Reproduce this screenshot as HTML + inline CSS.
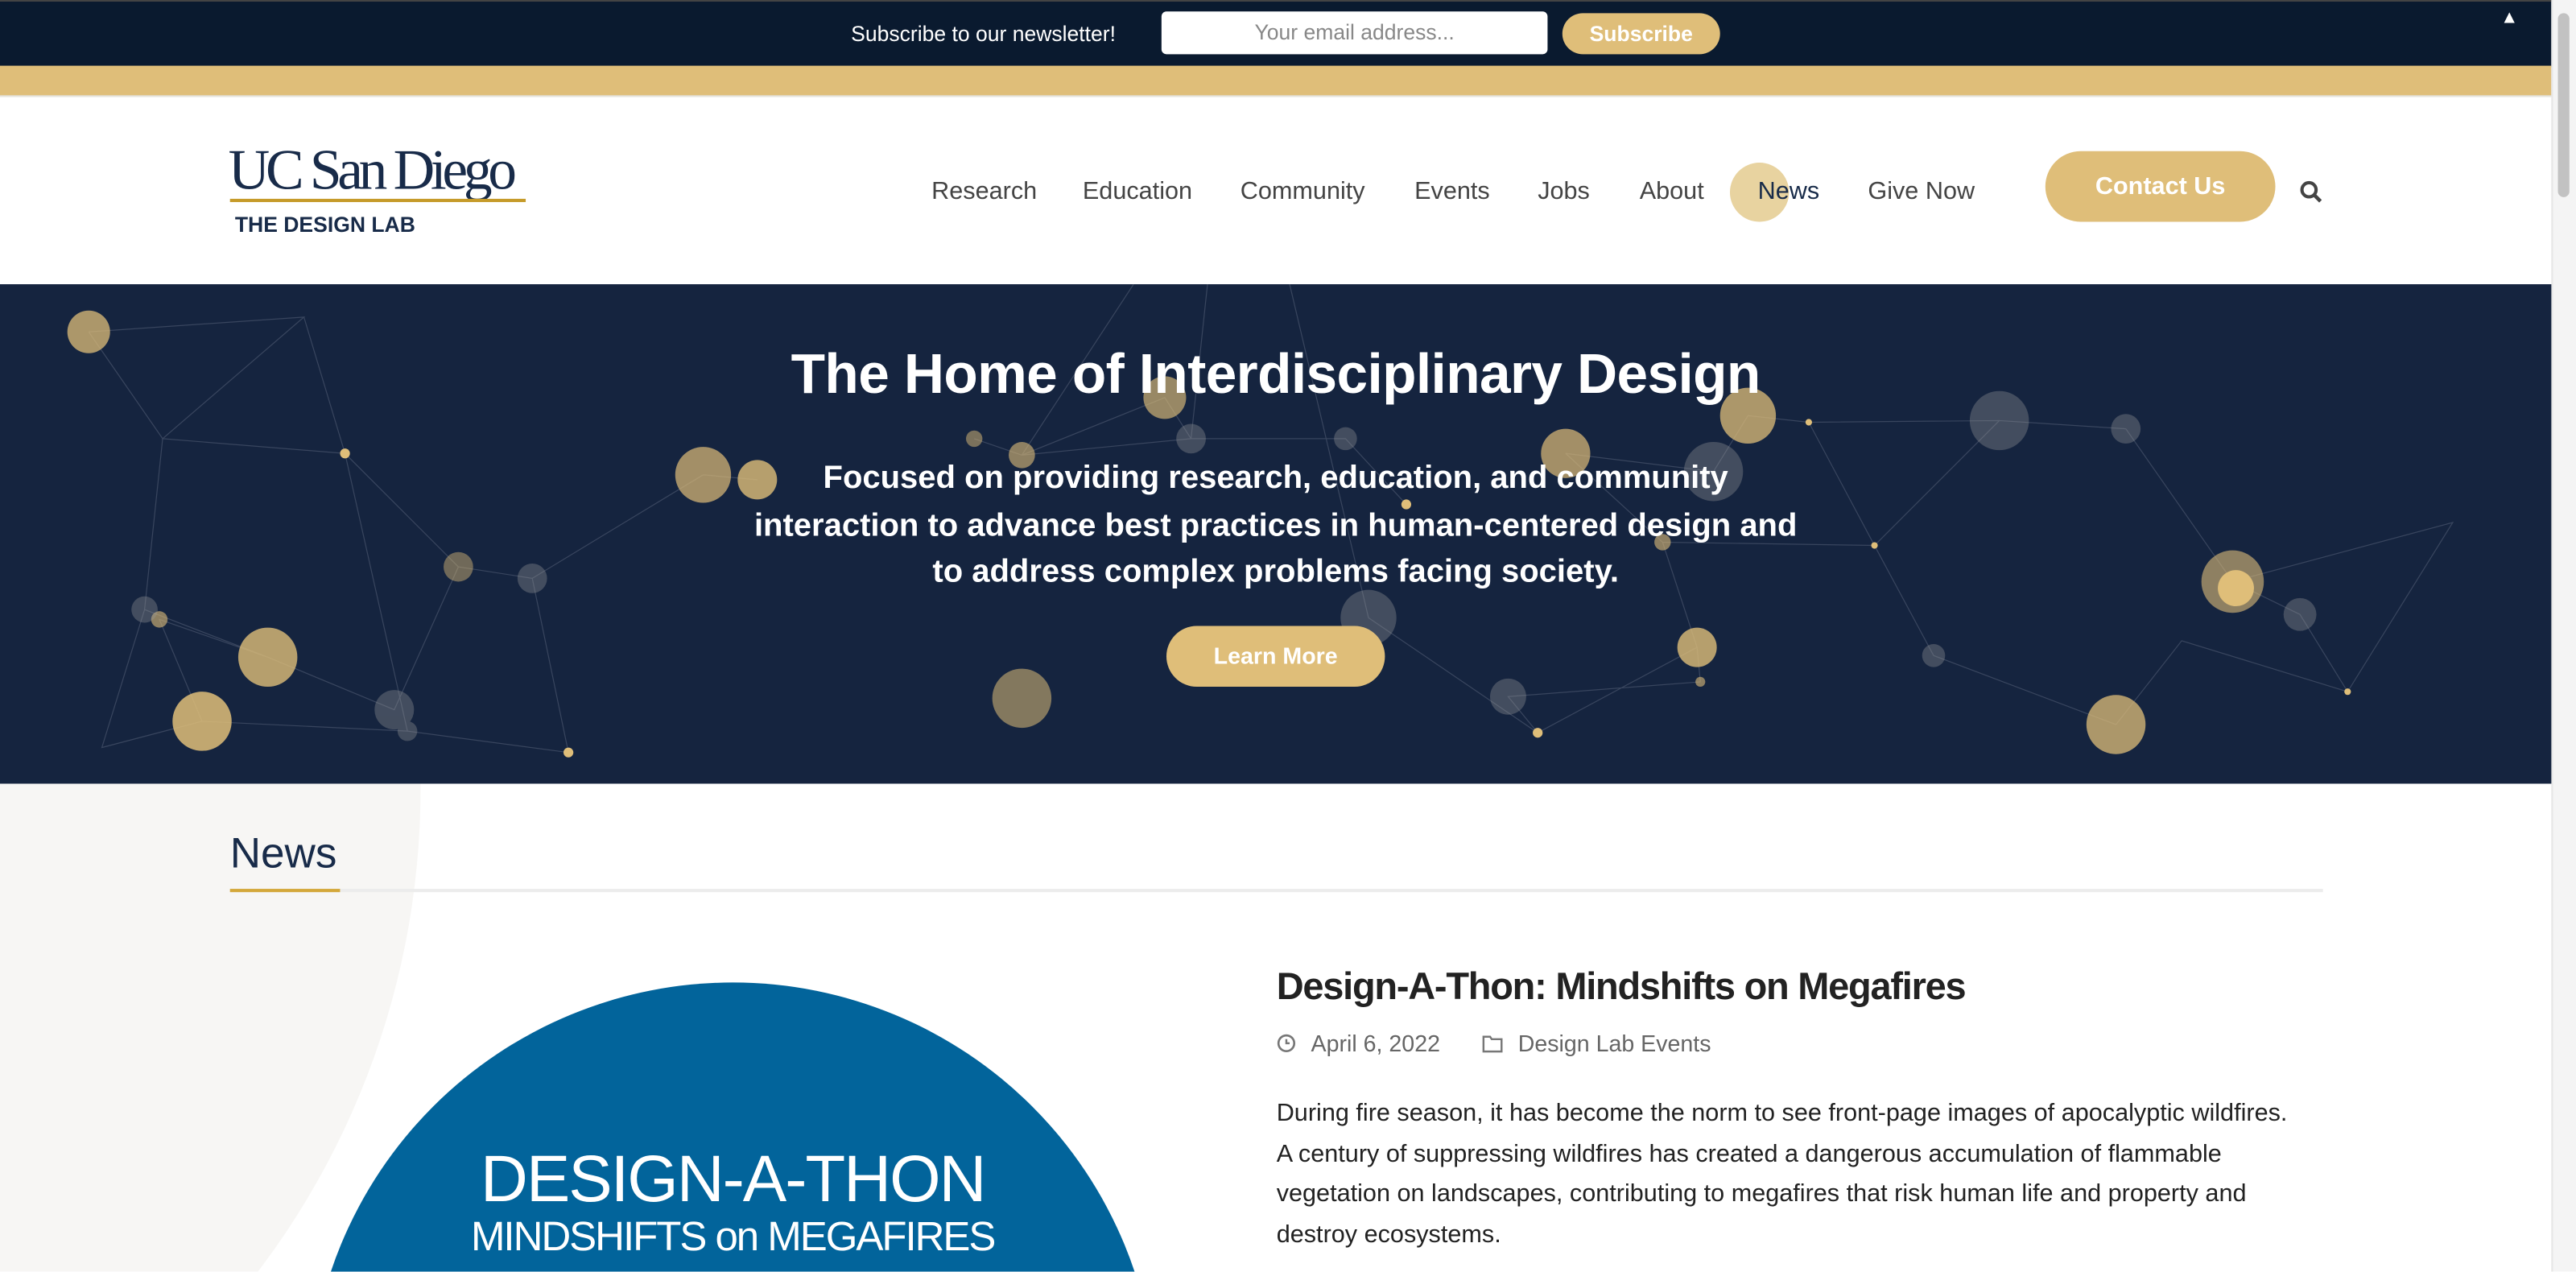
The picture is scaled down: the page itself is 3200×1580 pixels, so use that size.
<!DOCTYPE html>
<html><head><meta charset="utf-8"><style>
html,body{margin:0;padding:0;width:3200px;height:1580px;overflow:hidden;background:#fff}
#w{position:absolute;left:0;top:0;width:1568px;height:774px;transform:scale(2.0408);transform-origin:0 0;font-family:"Liberation Sans",sans-serif;overflow:hidden;background:#fff}
.a{position:absolute;white-space:nowrap}
.nav{top:108px;font-size:15px;color:#444}
</style></head><body><div id="w">
<div class="a" style="left:0;top:0;width:1553px;height:40px;background:#0a1a2f;border-top:1px solid #444"></div>
<div class="a" style="left:518px;top:13px;font-size:13px;color:#fff">Subscribe to our newsletter!</div>
<div class="a" style="left:707px;top:7px;width:235px;height:26px;background:#fff;border-radius:3px;font-size:13px;color:#888;text-align:center;line-height:26px">Your email address...</div>
<div class="a" style="left:951px;top:8px;width:96px;height:25px;background:#dfbe79;border-radius:13px;font-size:13px;color:#fff;font-weight:bold;text-align:center;line-height:25px">Subscribe</div>
<div class="a" style="left:1522px;top:5px;font-size:11px;color:#fff">▲</div>
<div class="a" style="left:0;top:40px;width:1553px;height:18px;background:#dfbe79;border-bottom:1px solid #e4e4e0"></div>
<div class="a" style="left:1553px;top:0;width:15px;height:774px;background:#f4f4f4;border-left:1px solid #e6e6e6"></div>
<div class="a" style="left:1557px;top:8px;width:7px;height:112px;background:#c2c2c2;border-radius:4px"></div>

<div class="a" style="left:139px;top:84px;font-family:'Liberation Serif',serif;font-size:35px;color:#182b49;letter-spacing:-2.6px">UC San Diego</div>
<div class="a" style="left:140px;top:121px;width:180px;height:2px;background:#c69b2a"></div>
<div class="a" style="left:143px;top:129px;font-size:13px;font-weight:bold;color:#182b49">THE DESIGN LAB</div>

<div class="a" style="left:1053px;top:99px;width:36px;height:36px;border-radius:50%;background:#e8d3a0"></div>
<div class="a nav" style="left:567px">Research</div>
<div class="a nav" style="left:659px">Education</div>
<div class="a nav" style="left:755px">Community</div>
<div class="a nav" style="left:861px">Events</div>
<div class="a nav" style="left:936px">Jobs</div>
<div class="a nav" style="left:998px">About</div>
<div class="a nav" style="left:1070px;color:#182b49">News</div>
<div class="a nav" style="left:1137px">Give Now</div>
<div class="a" style="left:1245px;top:92px;width:140px;height:43px;border-radius:22px;background:#dfbe79;color:#fff;font-weight:bold;font-size:15px;text-align:center;line-height:43px">Contact Us</div>
<svg class="a" style="left:1400px;top:110px" width="14" height="14" viewBox="0 0 14 14"><circle cx="5.5" cy="5.5" r="4.3" fill="none" stroke="#444" stroke-width="2"/><path d="M8.7 8.7L12.5 12.5" stroke="#444" stroke-width="2.2"/></svg>

<div class="a" style="left:0;top:173px;width:1553px;height:304px;background:#15243f"></div>
<svg class="a" style="left:0;top:0" width="1553" height="477" viewBox="0 0 1553 477">
<g stroke="#8a93a6" stroke-width="0.6" opacity="0.3" fill="none">
<path d="M54 202L185 193L99 267L210 276L279 345L324 352L346 458L248 445L123 439L62 455L88 371L163 400L240 432L279 345M99 267L88 371M54 202L99 267M185 193L210 276L248 445M123 439L97 377L163 400M428 289L461 292M593 267L622 277L725 267L819 267L856 307M622 277L709 242L725 267M690 173L622 277M735 173L725 267M785 173L833 376M953 276L1043 287L1064 253L1101 257L1217 256L1294 261M1101 257L1141 332L1177 399M1012 330L1141 332M1217 256L1141 332M1033 394L1035 415L918 424L936 446L1033 394M1294 261L1359 354L1400 374L1429 421L1328 390L1288 441M1359 354L1493 318L1429 421M1177 399L1288 441M833 376L936 446M953 276L1012 330L1033 394M324 352L428 289"/>
</g>
<g fill="#dfbe79">
<circle cx="54" cy="202" r="13" opacity=".75"/><circle cx="428" cy="289" r="17" opacity=".7"/><circle cx="461" cy="292" r="12" opacity=".8"/>
<circle cx="279" cy="345" r="9" opacity=".45"/><circle cx="97" cy="377" r="5" opacity=".6"/><circle cx="163" cy="400" r="18" opacity=".8"/>
<circle cx="123" cy="439" r="18" opacity=".85"/><circle cx="346" cy="458" r="3"/><circle cx="210" cy="276" r="3"/>
<circle cx="622" cy="425" r="18" opacity=".55"/><circle cx="709" cy="242" r="13" opacity=".65"/><circle cx="622" cy="277" r="8" opacity=".6"/>
<circle cx="593" cy="267" r="5" opacity=".5"/><circle cx="953" cy="276" r="15" opacity=".7"/><circle cx="1064" cy="253" r="17" opacity=".75"/>
<circle cx="1101" cy="257" r="2"/><circle cx="1033" cy="394" r="12" opacity=".8"/><circle cx="1035" cy="415" r="3" opacity=".6"/>
<circle cx="936" cy="446" r="3"/><circle cx="1359" cy="354" r="19" opacity=".6"/><circle cx="1361" cy="358" r="11"/>
<circle cx="1288" cy="441" r="18" opacity=".75"/><circle cx="1429" cy="421" r="2"/><circle cx="1141" cy="332" r="2"/>
<circle cx="1012" cy="330" r="5" opacity=".6"/><circle cx="856" cy="307" r="3"/>
</g>
<g fill="#9a9a9a" opacity=".35">
<circle cx="324" cy="352" r="9"/><circle cx="88" cy="371" r="8"/><circle cx="240" cy="432" r="12"/><circle cx="248" cy="445" r="6"/>
<circle cx="725" cy="267" r="9"/><circle cx="819" cy="267" r="7"/><circle cx="1043" cy="287" r="18"/><circle cx="1217" cy="256" r="18"/>
<circle cx="1294" cy="261" r="9"/><circle cx="833" cy="376" r="17"/><circle cx="918" cy="424" r="11"/><circle cx="1177" cy="399" r="7"/><circle cx="1400" cy="374" r="10"/>
</g>
</svg>
<div class="a" style="left:0;width:1553px;top:209px;text-align:center;font-size:34px;font-weight:bold;color:#fff;letter-spacing:-0.3px">The Home of Interdisciplinary Design</div>
<div class="a" style="left:0;width:1553px;top:277px;text-align:center;font-size:19.6px;font-weight:bold;color:#fff;line-height:28.5px;white-space:normal">Focused on providing research, education, and community<br>interaction to advance best practices in human-centered design and<br>to address complex problems facing society.</div>
<div class="a" style="left:710px;top:381px;width:133px;height:37px;border-radius:19px;background:#dfbe79;color:#fff;font-weight:bold;font-size:14px;text-align:center;line-height:37px">Learn More</div>

<svg class="a" style="left:0;top:477px" width="1553" height="297"><circle cx="-230" cy="3" r="486" fill="#f7f6f4"/><circle cx="446" cy="379" r="258" fill="#02649b"/></svg>
<div class="a" style="left:140px;top:504px;font-size:26px;color:#182b49">News</div>
<div class="a" style="left:140px;top:541px;width:1274px;height:2px;background:#ececec"></div>
<div class="a" style="left:140px;top:541px;width:67px;height:2px;background:#d4a83a"></div>
<div class="a" style="left:186px;width:520px;top:696px;text-align:center;font-size:40px;color:#fff;letter-spacing:-1px">DESIGN-A-THON</div>
<div class="a" style="left:186px;width:520px;top:739px;text-align:center;font-size:25px;color:#fff;letter-spacing:-1px">MINDSHIFTS on MEGAFIRES</div>
<div class="a" style="left:777px;top:587px;font-size:23px;font-weight:bold;color:#222;letter-spacing:-0.6px">Design-A-Thon: Mindshifts on Megafires</div>
<svg class="a" style="left:777px;top:629px" width="12" height="12"><circle cx="6" cy="6" r="4.8" fill="none" stroke="#777" stroke-width="1.3"/><path d="M6 3.5V6H8" stroke="#777" stroke-width="1.2" fill="none"/></svg>
<div class="a" style="left:798px;top:627px;font-size:14px;color:#666">April 6, 2022</div>
<svg class="a" style="left:902px;top:629px" width="13" height="12"><path d="M1 2H5L6 3.5H12V11H1Z" fill="none" stroke="#777" stroke-width="1.2"/></svg>
<div class="a" style="left:924px;top:627px;font-size:14px;color:#666">Design Lab Events</div>
<div class="a" style="left:777px;top:666px;font-size:15px;color:#222;line-height:24.5px;white-space:normal;width:640px;height:106px;overflow:hidden">During fire season, it has become the norm to see front-page images of apocalyptic wildfires.<br>A century of suppressing wildfires has created a dangerous accumulation of flammable<br>vegetation on landscapes, contributing to megafires that risk human life and property and<br>destroy ecosystems.</div>
</div></body></html>
